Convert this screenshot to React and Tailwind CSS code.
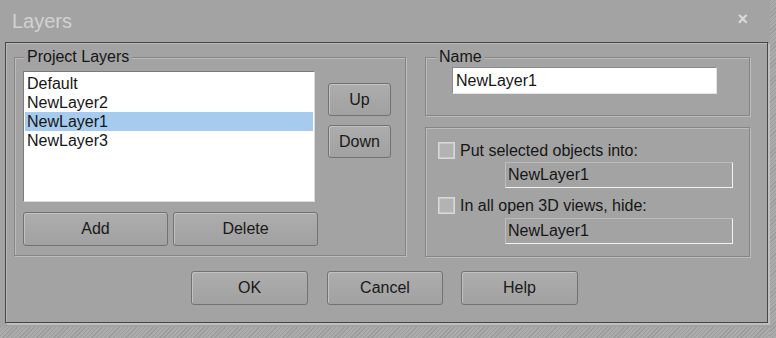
import React from 'react';

const btn =
  'flex items-center justify-center rounded-[3px] border border-[#727272] bg-gradient-to-b from-[#adadad] to-[#a1a1a1] shadow-[inset_1px_1px_0_#c2c2c2] text-[16px] text-[#1a1a1a]';

const group =
  'border border-[#868686] shadow-[inset_1px_1px_0_#bcbcbc,1px_1px_0_#bcbcbc]';

function Check({ label }) {
  return (
    <div className="flex items-center gap-[5px] h-[17px]">
      <span className="w-[17px] h-[17px] border border-[#d9d9d9] bg-[#b3b3b3] shadow-[inset_1px_1px_0_#c9c9c9,inset_-1px_-1px_0_#c9c9c9]" />
      <span className="text-[16px] leading-[18px] text-[#161616]">{label}</span>
    </div>
  );
}

function Field({ value }) {
  return (
    <div className="ml-[67px] w-[228px] h-[26px] border border-[#bdbdbd] border-r-[#f2f2f2] border-b-[#f2f2f2] flex items-center pl-[2px] text-[16px] text-[#161616]">
      {value}
    </div>
  );
}

export default function App() {
  const layers = ['Default', 'NewLayer2', 'NewLayer1', 'NewLayer3'];
  return (
    <div className="w-[776px] h-[338px] overflow-hidden bg-[#a3a3a3] flex font-['Liberation_Sans',Arial,sans-serif]">
      <div className="w-[770px] flex flex-col">
        <div className="h-[42px] flex items-start justify-between pl-[12px] pr-[22px] pt-[10px]">
          <span className="text-[20px] leading-[23px] text-[#d2d2d2]">Layers</span>
          <span className="text-[18px] leading-[18px] font-bold text-[#dadada]">×</span>
        </div>

        <div className="ml-[5px] w-[763px] h-[281px] border border-[#474747] shadow-[inset_1px_1px_0_#b8b8b8,2px_2px_0_#bfbfbf] flex flex-col">
          <div className="flex gap-[19px] pl-[8px] pt-[5px]">
            <fieldset className={`${group} w-[392px] h-[208px]`}>
              <legend className="ml-[9px] px-[3px] text-[16px] leading-[18px] text-[#161616] bg-[#a3a3a3]">
                Project Layers
              </legend>
              <div className="px-[8px]">
                <div className="flex pt-[5px]">
                  <div className="w-[292px] h-[131px] bg-white border border-[#7a7a7a] border-r-[#dcdcdc] border-b-[#dcdcdc] px-[1px] pt-[2px]">
                    {layers.map((l) => (
                      <div
                        key={l}
                        className={`h-[19px] px-[2px] text-[16px] leading-[19px] text-[#161616] ${
                          l === 'NewLayer1' ? 'bg-[#a7cbef]' : ''
                        }`}
                      >
                        {l}
                      </div>
                    ))}
                  </div>
                  <div className="ml-[13px] pt-[12px] flex flex-col gap-[9px]">
                    <div className={`${btn} w-[63px] h-[33px]`}>Up</div>
                    <div className={`${btn} w-[63px] h-[33px]`}>Down</div>
                  </div>
                </div>
                <div className="flex gap-[5px] mt-[10px]">
                  <div className={`${btn} w-[145px] h-[34px]`}>Add</div>
                  <div className={`${btn} w-[145px] h-[34px]`}>Delete</div>
                </div>
              </div>
            </fieldset>

            <div className="flex flex-col gap-[11px]">
              <fieldset className={`${group} w-[325px] h-[68px]`}>
                <legend className="ml-[10px] px-[3px] text-[16px] leading-[18px] text-[#161616] bg-[#a3a3a3]">
                  Name
                </legend>
                <div className="ml-[26px] mt-[1px] w-[265px] h-[27px] bg-white border border-[#8a8a8a] border-r-[#e4e4e4] border-b-[#e4e4e4] flex items-center pl-[3px] text-[16px] text-[#161616]">
                  NewLayer1
                </div>
              </fieldset>
              <div className={`${group} w-[325px] h-[130px] pl-[12px] pt-[14px] flex flex-col`}>
                <Check label="Put selected objects into:" />
                <div className="mt-[3px]">
                  <Field value="NewLayer1" />
                </div>
                <div className="mt-[9px]">
                  <Check label="In all open 3D views, hide:" />
                </div>
                <div className="mt-[4px]">
                  <Field value="NewLayer1" />
                </div>
              </div>
            </div>
          </div>

          <div className="flex justify-center mt-[14px] pr-[4px]">
            <div className={`${btn} w-[117px] h-[34px]`}>OK</div>
            <div className={`${btn} w-[116px] h-[34px] ml-[19px]`}>Cancel</div>
            <div className={`${btn} w-[117px] h-[34px] ml-[18px]`}>Help</div>
          </div>
        </div>

        <div className="mt-auto h-[11px] bg-[repeating-linear-gradient(135deg,#9b9b9b_0_1px,#acacac_1px_3px)]" />
      </div>
      <div className="w-[6px] h-full bg-[repeating-linear-gradient(135deg,#9b9b9b_0_1px,#acacac_1px_3px)]" />
    </div>
  );
}
